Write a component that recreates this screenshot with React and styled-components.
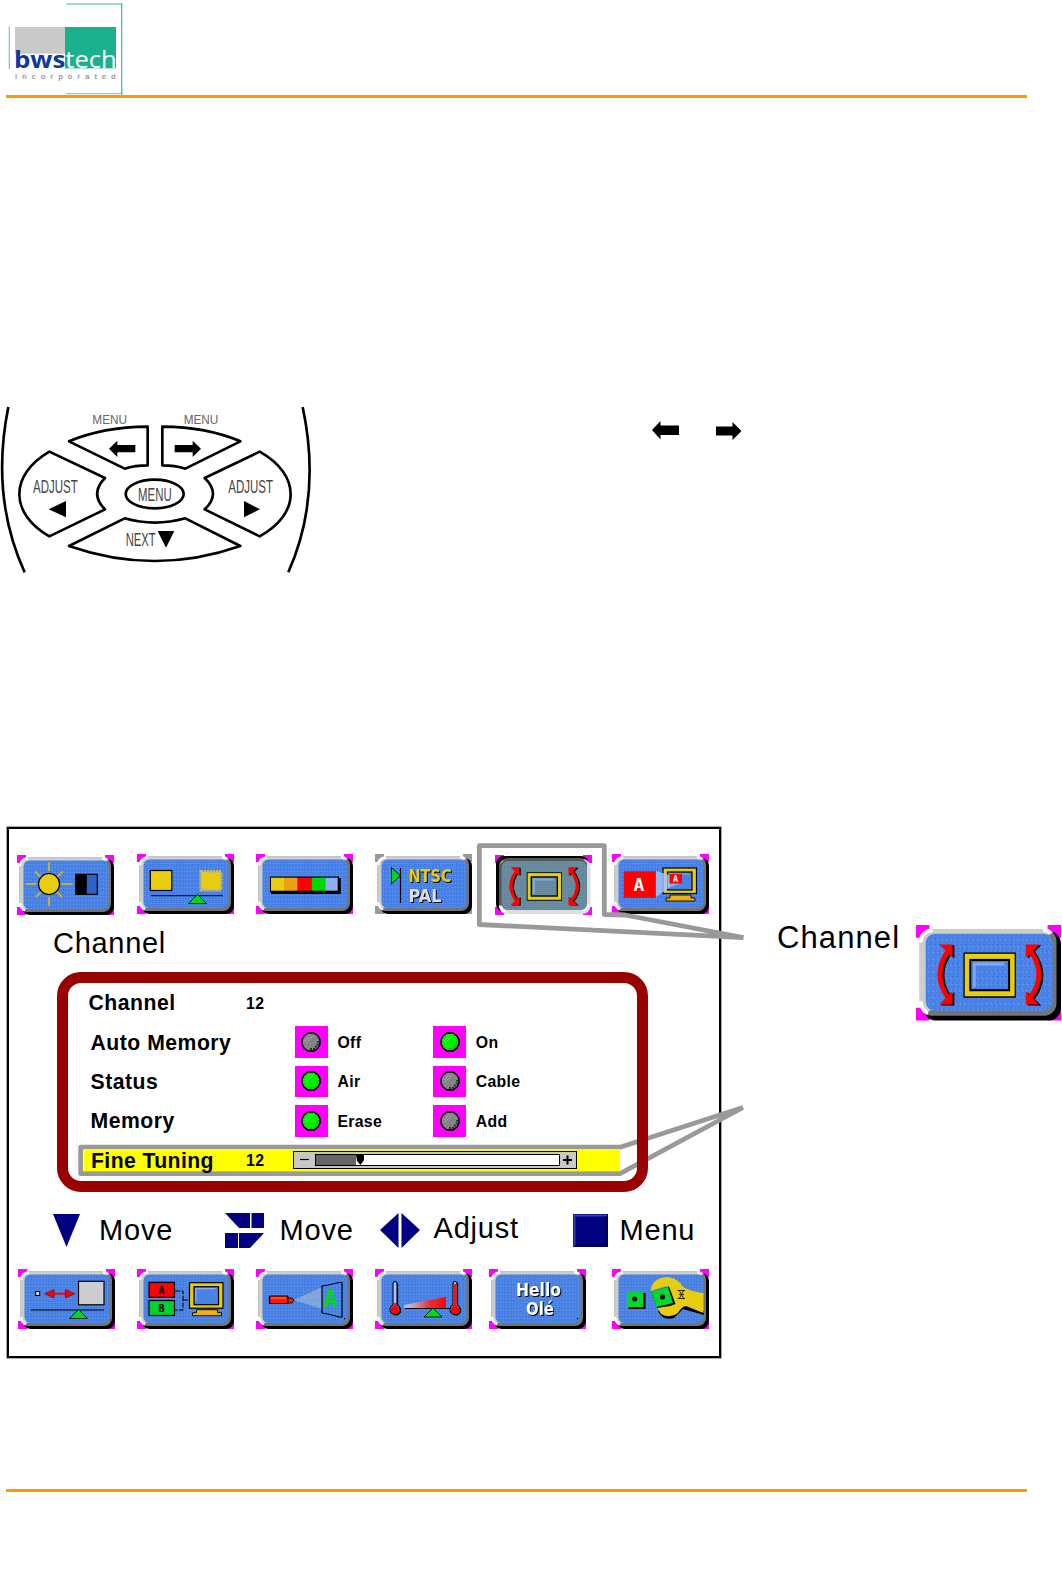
import React from "react";
import styled, { createGlobalStyle } from "styled-components";

const ORANGE = "#ff9900";
const MAGENTA = "#ff00ff";
const DARK_RED = "#990000";
const NAVY = "#000080";
const CALLOUT_GRAY = "#999999";
const YELLOW = "#e8cc10";
const BLUE = "#4b85ea";

const GlobalStyle = createGlobalStyle`
  body {
    margin: 0;
    background-color: white;
    color: black;
    font-family: "Liberation Sans", Arial, sans-serif;
  }

  svg {
    display: block;
    flex-shrink: 0;
  }
`;

const Page = styled.div`
  width: 1062px;
  height: 1573px;
  display: flex;
  flex-direction: column;
  overflow: hidden;
`;

const Header = styled.header`
  height: 95px;
`;

const Rule = styled.div`
  height: 3px;
  margin: 0 35px 0 6px;
  background-color: ${ORANGE};
`;

const RemoteSection = styled.section`
  height: 185px;
  margin-top: 297px;
  display: flex;
  align-items: flex-start;
`;

const Arrows = styled.div`
  display: flex;
  gap: 36px;
  margin: 26px 0 0 332px;
`;

const OsdSection = styled.section`
  height: 531px;
  margin-top: 247px;
  margin-bottom: 131px;
  padding-left: 7px;
  display: flex;
  align-items: flex-start;
  position: relative;
`;

const Screen = styled.div`
  box-sizing: border-box;
  width: 714px;
  height: 531px;
  border: 2px solid black;
  box-shadow: 0 0 0 0.5px #555;
  padding-top: 25px;
  flex-shrink: 0;
`;

const ButtonRow = styled.div`
  height: 62px;
  display: flex;
  align-items: flex-start;
`;

const ButtonSlot = styled.div`
  margin-left: ${props => props.$gap}px;
  padding-top: ${props => props.$drop || 0}px;
`;

const ScreenTitle = styled.div`
  margin: 11px 0 0 44px;
  height: 32px;
  line-height: 32px;
  font-size: 29px;
  letter-spacing: 0.7px;
`;

const Panel = styled.div`
  box-sizing: border-box;
  position: relative;
  z-index: 2;
  width: 591px;
  height: 220px;
  margin: 13px 0 0 47.5px;
  border: 11px solid ${DARK_RED};
  border-radius: 24px;
`;

const Row = styled.div`
  height: 39.4px;
  display: flex;
  align-items: center;
`;

const Label = styled.div`
  box-sizing: border-box;
  width: ${props => props.$width || 178.5}px;
  padding-top: 1px;
  padding-left: ${props => props.$indent || 23}px;
  font-size: 21.2px;
  font-weight: 700;
  letter-spacing: ${props => props.$spacing || 0.5}px;
  white-space: nowrap;
`;

const Value = styled.div`
  width: 48.5px;
  padding-top: 2px;
  font-size: 15.8px;
  font-weight: 700;
  letter-spacing: 0.5px;
`;

const Option = styled.div`
  width: 138.3px;
  display: flex;
  align-items: center;
`;

const OptionName = styled.span`
  padding-top: 2px;
  font-size: 15.8px;
  font-weight: 700;
  letter-spacing: 0.3px;
`;

const Bulb = styled.div`
  width: 33.5px;
  height: 31.5px;
  margin-right: 9.5px;
  display: flex;
  align-items: center;
  justify-content: center;
  background-color: ${MAGENTA};
`;

const Highlight = styled.div`
  width: 536px;
  height: 21.6px;
  margin-left: 16.5px;
  display: flex;
  align-items: center;
  background-color: #ffff00;
`;

const Slider = styled.div`
  box-sizing: border-box;
  width: 284px;
  height: 18px;
  margin-left: -2px;
  border: 1px solid black;
  background-color: #c8c8c8;
  display: flex;
  align-items: center;
`;

const Track = styled.div`
  box-sizing: border-box;
  width: 245px;
  height: 12px;
  border: 1px solid black;
  background-color: white;
  display: flex;
`;

const TrackFill = styled.div`
  width: 40px;
  background-color: #666;
`;

const Legend = styled.div`
  height: 36px;
  margin-top: 20px;
  display: flex;
  align-items: center;
`;

const LegendItem = styled.div`
  width: ${props => props.$width}px;
  padding-left: ${props => props.$left || 0}px;
  display: flex;
  align-items: center;
  gap: ${props => props.$gap}px;
`;

const LegendText = styled.span`
  font-size: 29px;
  line-height: 32px;
  letter-spacing: 0.8px;
  padding-bottom: ${props => props.$lift || 0}px;
`;

const Aside = styled.div`
  display: flex;
  margin: 98px 0 0 56px;
`;

const AsideTitle = styled.div`
  width: 138.5px;
  margin-top: -4px;
  font-size: 31px;
  line-height: 34px;
  letter-spacing: 1.1px;
`;

const Callouts = styled.svg`
  position: absolute;
  left: 0;
  top: 0;
  z-index: 1;
`;

const BottomButtons = styled(ButtonRow)`
  margin-top: 21px;
`;

const ShadowText = styled.text`
  font-family: "DejaVu Sans", sans-serif;
  font-weight: 700;
  filter: drop-shadow(1.6px 1.3px 0 black);
`;

const Logo = () => (
  <svg width="130" height="95" viewBox="0 0 390 285">
    <rect x="45" y="81" width="150" height="80" fill="#cacaca" />
    <rect x="195" y="81" width="153" height="124" fill="#1bb18d" />
    <path d="M28 80V207M199 12H367M199 281H367" stroke="#7dd1bd" strokeWidth="4" />
    <path d="M365 11V284" stroke="#4bbf9f" strokeWidth="4" />
    <g fontFamily="Open Sans, Noto Sans, sans-serif" fontSize="72">
      <text x="42" y="204" fontWeight="700" fill="#0c3a9e" textLength="154" lengthAdjust="spacingAndGlyphs">
        bws
      </text>
      <text x="196" y="204" fontWeight="500" fill="white" textLength="154" lengthAdjust="spacingAndGlyphs">
        tech
      </text>
    </g>
    <text x="45" y="237" fontSize="23" fontWeight="700" fill="#999" textLength="302">
      incorporated
    </text>
  </svg>
);

const Remote = () => (
  <svg width="320" height="185" viewBox="0 0 960 555" fill="none" stroke="black">
    <g strokeWidth="8" strokeLinejoin="round">
      <path d="M25 36C-8 200 0 370 74 532" />
      <path d="M908 36C943 200 937 370 865 532" />
      <path d="M443 95V211Q405 211 374 221L207 139Q310 96 443 95Z" />
      <path d="M487 95V211Q525 211 556 221L721 139Q620 96 487 95Z" />
      <path d="M148 170L315 249Q268 296 315 343L148 424C28 355 28 240 148 170Z" />
      <path d="M779 170L614 249Q664 296 614 343L779 424C903 355 903 240 779 170Z" />
      <path d="M207 453L374 370Q464 396 556 370L721 453Q464 543 207 453Z" />
      <ellipse cx="464" cy="297" rx="87" ry="43" />
    </g>
    <g fill="black" stroke="none">
      <path d="M327 161L352 137V150H406V172H352V186Z" />
      <path d="M603 161L578 137V150H524V172H578V186Z" />
      <path d="M146 343L198 318V367Z" />
      <path d="M780 343L732 318V367Z" />
      <path d="M473 408H523L498 458Z" />
    </g>
    <g fill="#444" stroke="none" fontFamily="Liberation Sans, Arial, sans-serif">
      <g fontSize="37" fill="#666">
        <text x="277" y="88" textLength="104" lengthAdjust="spacingAndGlyphs">MENU</text>
        <text x="551" y="87" textLength="104" lengthAdjust="spacingAndGlyphs">MENU</text>
      </g>
      <g fontSize="54">
        <text x="99" y="293" textLength="134" lengthAdjust="spacingAndGlyphs">ADJUST</text>
        <text x="685" y="293" textLength="134" lengthAdjust="spacingAndGlyphs">ADJUST</text>
        <text x="414" y="319" textLength="101" lengthAdjust="spacingAndGlyphs">MENU</text>
        <text x="377" y="452" textLength="90" lengthAdjust="spacingAndGlyphs">NEXT</text>
      </g>
    </g>
  </svg>
);

const ArrowLeft = () => (
  <svg width="27" height="19" viewBox="0 0 27 19">
    <path d="M0 9L8.500 0V4.500H27V14H8.500V18.500Z" />
  </svg>
);

const ArrowRight = () => (
  <svg width="27" height="19" viewBox="0 0 27 19">
    <path d="M26.500 10L17.500 1V5.500H1V14.500H17.500V19Z" />
  </svg>
);

// bevelled key, drawn on a 97x61 grid
const Key = ({ width = 97, height = 61, corner = MAGENTA, pressed, children }) => (
  <svg width={width} height={height} viewBox="0 0 97 61" preserveAspectRatio="none">
    <defs>
      <pattern id="weave" width="3" height="4" patternUnits="userSpaceOnUse">
        <path d="M0 0h1v1h-1zM1 2h1v1h-1z" fill="#2f62c8" opacity="0.5" />
        <path d="M2 1h1v1h-1z" fill="#8aa6d8" opacity="0.5" />
      </pattern>
    </defs>
    <path d="M0 0H9V8H0ZM88 0H97V8H88ZM0 52H9V60H0ZM88 52H97V60H88Z" fill={corner} />
    {pressed ? (
      <>
        <rect x="1" y="1" width="93" height="56" rx="8" fill="black" />
        <rect x="4" y="4" width="91.500" height="55" rx="8" fill="#dedede" />
        <path d="M11 3H87L92 8V20L12 54L4 50V10Z" fill="#555" />
        <path d="M5 51L10 57M88 56L94 50" stroke="white" strokeWidth="2.500" />
        <rect x="6.500" y="6" width="85.500" height="49" rx="6" fill="#688c9d" />
        <rect x="6.500" y="6" width="85.500" height="49" rx="6" fill="url(#weave)" opacity="0.45" />
      </>
    ) : (
      <>
        <rect x="5" y="4" width="92" height="56" rx="8" fill="black" />
        <rect x="2.500" y="2.500" width="91.500" height="54.500" rx="8" fill="#747474" />
        <path d="M10 2.500H86Q90 2.500 91.500 5L86 8H12V53L6 55Q2.500 53 2.500 49V10Q3 3 10 2.500Z" fill="#cdcdcd" />
        <path d="M3 11Q3.500 4 11 3.200M3.200 48Q3.500 53.500 8 55.500M85 3.200Q88 3 90 5" fill="none" stroke="white" strokeWidth="2.400" />
        <rect x="6.500" y="5.500" width="85" height="48.500" rx="6" fill={BLUE} />
        <rect x="6.500" y="5.500" width="85" height="48.500" rx="6" fill="url(#weave)" />
      </>
    )}
    {children}
  </svg>
);

const Fulcrum = ({ x, y }) => (
  <path d={`M${x} ${y}l9 9h-18z`} fill="#00d818" stroke="black" strokeWidth="0.8" />
);

const Monitor = ({ x, y }) => (
  <g transform={`translate(${x} ${y})`} stroke="black">
    <rect width="33.500" height="25.500" fill={YELLOW} strokeWidth="1.200" />
    <rect x="4.500" y="4" width="24.500" height="18" fill="#4b82e6" strokeWidth="1.200" />
    <path d="M6.500 19V6H26" fill="none" stroke="#8fb0f0" strokeWidth="1.200" />
    <path d="M7 27H28V30H32V33H3V30H7Z" fill="#f0b010" strokeWidth="0.900" />
  </g>
);

const BrightnessIcon = () => (
  <g>
    <path
      d="M32 7V16M32 42V51M9 29H19M45 29H55.500M18 16.500L24 22M46 16.500L40 22M19 42L24 37M45 42L40 37"
      stroke="#bfae4e"
      strokeWidth="2.200"
    />
    <circle cx="32" cy="29" r="10.500" fill={YELLOW} stroke="black" strokeWidth="1.200" />
    <rect x="58.800" y="19.300" width="21.500" height="20" fill="#2f62c8" stroke="black" strokeWidth="1.200" />
    <rect x="58.500" y="19" width="11.300" height="20.500" />
  </g>
);

const SharpnessIcon = () => (
  <g>
    <rect x="13.300" y="16.500" width="21.500" height="20" fill={YELLOW} stroke="black" strokeWidth="1.200" />
    <rect x="64" y="17.500" width="20" height="18.500" fill={YELLOW} stroke="#c9bd62" strokeWidth="3" strokeDasharray="2 1" />
    <path d="M14 41.700H86" stroke="black" />
    <Fulcrum x={60.5} y={40.5} />
  </g>
);

const ColorIcon = () => (
  <g>
    <rect x="15" y="24" width="69.800" height="16" />
    <rect x="14" y="22.500" width="69" height="16" />
    <rect x="15" y="23.700" width="13" height="13" fill={YELLOW} />
    <rect x="28" y="23.700" width="13.700" height="13" fill="#f0a010" />
    <rect x="41.700" y="23.700" width="13.800" height="13" fill="#ff0000" />
    <rect x="55.500" y="23.700" width="13.700" height="13" fill="#00d800" />
    <rect x="69.200" y="23.700" width="12.500" height="13" fill="#8fb0f0" />
  </g>
);

const StandardIcon = () => (
  <g>
    <path d="M16.500 13.500V30L25.300 21.700Z" fill="#00d818" stroke="black" strokeWidth="0.800" />
    <path d="M25.500 14V49" stroke="black" strokeWidth="1.200" />
    <ShadowText x="33.500" y="28" fontSize="18" textLength="43" lengthAdjust="spacingAndGlyphs" fill={YELLOW}>
      NTSC
    </ShadowText>
    <ShadowText x="33.500" y="48.200" fontSize="18" textLength="33" lengthAdjust="spacingAndGlyphs" fill="#dedede">
      PAL
    </ShadowText>
  </g>
);

const ChannelIcon = () => (
  <g>
    {[1.3, 0].map(dx => (
      <g key={dx} transform={`translate(${dx} ${dx ? 0.6 : 0})`} stroke={dx ? "black" : "#ff0000"} fill={dx ? "black" : "#ff0000"}>
        <path d="M21 17Q11 31 21 45" fill="none" strokeWidth="3.300" />
        <path d="M15.500 12.200H24.400V20.500ZM15.500 50H24.400V41.700Z" stroke="none" />
        <path d="M77 17Q87.500 31 77 45" fill="none" strokeWidth="3.300" />
        <path d="M73.500 12.200H82.500L73.500 20.500ZM73.500 50H82.500L73.500 41.700Z" stroke="none" />
      </g>
    ))}
    <rect x="32.500" y="18" width="33.500" height="27" fill="none" stroke="black" strokeWidth="1.500" />
    <rect x="34.200" y="19.700" width="30.200" height="23.500" fill="none" stroke={YELLOW} strokeWidth="3.200" />
    <rect x="36.300" y="22" width="26" height="19" fill="none" stroke="black" strokeWidth="1.300" />
    <path d="M39 39V24.500H59" fill="none" stroke="#84a8ee" strokeWidth="1.800" />
  </g>
);

const PipIcon = () => (
  <g>
    <rect x="11.700" y="17.300" width="32" height="26.500" fill="#ff0000" />
    <text x="21.500" y="37" fontSize="18" fontWeight="700" fill="white" fontFamily="DejaVu Sans Mono, monospace">
      A
    </text>
    <Monitor x={51} y={14} />
    <path d="M44 17L57 21V34L44 43Z" fill="#a6c3ff" opacity="0.8" />
    <path d="M57 21L70 29L57 34Z" fill="#a6c3ff" opacity="0.6" />
    <rect x="57.500" y="20" width="12.500" height="9.500" fill="#ff0000" />
    <text x="61" y="28" fontSize="8.500" fontWeight="700" fill="white" fontFamily="DejaVu Sans Mono, monospace">
      A
    </text>
  </g>
);

const SizeIcon = () => (
  <g>
    <rect x="17.700" y="22.500" width="4" height="4" fill="#dedede" stroke="black" />
    <path d="M33 24.700H50" stroke="#ff0000" strokeWidth="2" />
    <path d="M26.500 24.700L36 20.500V29ZM57 24.700L47.500 20.500V29Z" fill="#ff0000" stroke="#400" strokeWidth="0.500" />
    <rect x="60.500" y="12.300" width="25.500" height="23.500" fill="#cdcdd0" stroke="black" strokeWidth="1.200" />
    <path d="M12.700 41H86" stroke="black" />
    <Fulcrum x={60.5} y={40.5} />
  </g>
);

const SourceIcon = () => (
  <g>
    <rect x="12" y="13.300" width="25.500" height="15" fill="#ff0000" stroke="black" strokeWidth="1.200" />
    <rect x="12" y="31.500" width="25.500" height="15" fill="#00d030" stroke="black" strokeWidth="1.200" />
    <g fontSize="10" fontWeight="700" fontFamily="DejaVu Sans Mono, monospace">
      <text x="21.500" y="25">A</text>
      <text x="21.500" y="43">B</text>
    </g>
    <path d="M38 22H46V41H38M46 31H52" fill="none" stroke="black" strokeDasharray="5 1.500" />
    <Monitor x={52.5} y={13.7} />
  </g>
);

const KeystoneIcon = () => (
  <g>
    <path d="M38 31L66 18V40Z" fill="#86a9dc" opacity="0.85" />
    <path d="M41 30L66 20M41 31L66 27M41 32L66 35" stroke="#b9bd7a" strokeDasharray="1 3" />
    <rect x="13.500" y="27" width="18.500" height="7.500" rx="1" fill="#ff1800" stroke="black" strokeWidth="1.200" />
    <path d="M32 29H36L38 31L36 34H32Z" fill="#e82000" stroke="black" strokeWidth="0.800" />
    <path d="M15 29H30" stroke="#ff8040" />
    <path d="M66 17L72 16L83 13.500H86V48H83L72 45L66 44Z" fill="none" stroke="black" strokeWidth="1.200" />
    <text x="67.500" y="38" fontSize="23" fontWeight="700" fill="#00d818" fontFamily="DejaVu Sans Mono, monospace">
      A
    </text>
    <rect x="88" y="49" width="1.200" height="1.200" />
  </g>
);

const Thermometer = ({ x, full }) => (
  <g>
    <path d={`M${x - 2} 36V14q2 -3 4 0V36a5 5 0 1 1 -4 0Z`} transform="translate(1.2 0.8)" />
    <path d={`M${x - 2} 36V14q2 -3 4 0V36a5 5 0 1 1 -4 0Z`} fill="#a6c3ff" stroke="black" strokeWidth="1.100" />
    <path d={`M${x} 41V${full ? 15 : 34}`} stroke="#ff1010" strokeWidth="3" />
    <circle cx={x} cy="41" r="4.300" fill="#ff0000" />
  </g>
);

const TemperatureIcon = () => (
  <g>
    <defs>
      <linearGradient id="heat">
        <stop offset="0" stopColor="#a6c3ff" />
        <stop offset="0.200" stopColor="#c8a8c8" />
        <stop offset="0.600" stopColor="#ee3038" />
        <stop offset="1" stopColor="#ff0000" />
      </linearGradient>
    </defs>
    <Thermometer x={20} />
    <Thermometer x={80} full />
    <path d="M29 36L71 28V39H29Z" fill="url(#heat)" />
    <path d="M30 39.500H76" stroke="black" />
    <Fulcrum x={58} y={39} />
  </g>
);

const LanguageIcon = () => (
  <g>
    <ShadowText x="27" y="26.500" fontSize="17" textLength="45" lengthAdjust="spacingAndGlyphs" fill="white">
      Hello
    </ShadowText>
    <ShadowText x="37" y="46" fontSize="17" textLength="28" lengthAdjust="spacingAndGlyphs" fill="white">
      Olé
    </ShadowText>
    <rect x="88" y="49" width="1.200" height="1.200" />
  </g>
);

const SetupIcon = () => (
  <g>
    <rect x="16.500" y="24" width="17" height="16" />
    <rect x="15" y="22.700" width="16.500" height="15.500" fill="#00d830" />
    <circle cx="22.700" cy="30" r="2.500" />
    <path d="M46 42Q50 52 62 49L71 40L92 46V42L72 32Z" />
    <path
      d="M38.500 22Q40 9 55 8Q66 9 71 18Q80 23 91.500 24V44L74 37Q69 38 66 44Q58 50 49 45L45 38L61 32L55 17Z"
      fill={YELLOW}
    />
    <path d="M39 23L57 17.500L63.500 35L58 37L45 39Z" />
    <path d="M39 22.700L56 17.700L61 34L44.500 38Z" fill="#00d830" />
    <circle cx="50.500" cy="28" r="2.500" />
    <path d="M67 21L72 30M72 21L67 30M65.500 21.500H73M65.500 29.500H73M67 25.500H72" stroke="black" strokeWidth="0.800" />
  </g>
);

const topKeys = [
  { icon: BrightnessIcon, gap: 8, drop: 1 },
  { icon: SharpnessIcon, gap: 23 },
  { icon: ColorIcon, gap: 22 },
  { icon: StandardIcon, gap: 21.5, corner: "#999" },
  { icon: ChannelIcon, gap: 23, drop: 1, pressed: true },
  { icon: PipIcon, gap: 20.5 }
];

const bottomKeys = [
  { icon: SizeIcon, gap: 9 },
  { icon: SourceIcon, gap: 22 },
  { icon: KeystoneIcon, gap: 22 },
  { icon: TemperatureIcon, gap: 21.5 },
  { icon: LanguageIcon, gap: 17.5 },
  { icon: SetupIcon, gap: 26 }
];

const settings = [
  { label: "Auto Memory", options: [["Off", false], ["On", true]] },
  { label: "Status", options: [["Air", true], ["Cable", false]] },
  { label: "Memory", options: [["Erase", true], ["Add", false]] }
];

const renderKeys = keys =>
  keys.map(({ icon: Icon, gap, drop, ...rest }, i) => (
    <ButtonSlot key={i} $gap={gap} $drop={drop}>
      <Key {...rest}>
        <Icon />
      </Key>
    </ButtonSlot>
  ));

const Lamp = ({ on }) => (
  <svg width="20" height="20" viewBox="0 0 20 20">
    <path
      d="M7 1H13L17 4L19 8V12L17 16L13 19H7L3 16L1 12V8L3 4Z"
      fill={on ? "#00f000" : "#858585"}
      stroke="black"
      strokeWidth="1.500"
    />
    <path d="M4 9L9 3.500M5 11L12 4" stroke={on ? "#90ff90" : "#b5b5b5"} strokeDasharray="2 1" />
    <path d="M9 17H13L17 12V9" fill="none" stroke={on ? "#3f9a3f" : "#2c2c2c"} strokeWidth="2" strokeDasharray="2 1" />
  </svg>
);

const SliderSign = ({ plus }) => (
  <svg width={plus ? 16 : 21} height="16" viewBox={plus ? "0 0 16 16" : "0 0 21 16"}>
    <path d={plus ? "M3 8H12M7.500 3.500V12.500" : "M6 7.500H15"} stroke="black" strokeWidth={plus ? 2 : 1.2} />
  </svg>
);

const Knob = () => (
  <svg width="9" height="10" viewBox="0 0 9 10">
    <path d="M0 0H8V5L4.500 10L1 6Z" />
  </svg>
);

const App = () => {
  return (
    <Page>
      <GlobalStyle />
      <Header>
        <Logo />
      </Header>
      <Rule />
      <RemoteSection>
        <Remote />
        <Arrows>
          <ArrowLeft />
          <ArrowRight />
        </Arrows>
      </RemoteSection>
      <OsdSection>
        <Screen>
          <ButtonRow>{renderKeys(topKeys)}</ButtonRow>
          <ScreenTitle>Channel</ScreenTitle>
          <Panel>
            <Row>
              <Label $indent={21}>Channel</Label>
              <Value>12</Value>
            </Row>
            {settings.map(v => (
              <Row key={v.label}>
                <Label>{v.label}</Label>
                <Value />
                {v.options.map(([name, on]) => (
                  <Option key={name}>
                    <Bulb>
                      <Lamp on={on} />
                    </Bulb>
                    <OptionName>{name}</OptionName>
                  </Option>
                ))}
              </Row>
            ))}
            <Row>
              <Highlight>
                <Label $width={162} $indent={7} $spacing={0.4}>Fine Tuning</Label>
                <Value>12</Value>
                <Slider>
                  <SliderSign />
                  <Track>
                    <TrackFill />
                    <Knob />
                  </Track>
                  <SliderSign plus />
                </Slider>
              </Highlight>
            </Row>
          </Panel>
          <Legend>
            <LegendItem $left={44} $width={171.5} $gap={19}>
              <svg width="27" height="34" viewBox="0 0 27 34">
                <path d="M0 1H27L13.500 34Z" fill={NAVY} />
              </svg>
              <LegendText>Move</LegendText>
            </LegendItem>
            <LegendItem $width={155.5} $gap={16}>
              <svg width="39" height="35" viewBox="0 0 39 35">
                <path d="M0 0H25V15H14ZM26.500 0H39V15H26.500ZM0 20H13V35H0ZM14 20H39L25 35H14Z" fill={NAVY} />
              </svg>
              <LegendText>Move</LegendText>
            </LegendItem>
            <LegendItem $width={192.5} $gap={13.5}>
              <svg width="40" height="35" viewBox="0 0 40 35">
                <path d="M0 17L18.500 0V35ZM40 17L21.500 0V35Z" fill={NAVY} />
              </svg>
              <LegendText $lift={4}>Adjust</LegendText>
            </LegendItem>
            <LegendItem $width={130} $gap={12}>
              <svg width="35" height="33" viewBox="0 0 35 33">
                <rect width="35" height="33" fill={NAVY} />
                <path d="M1.500 32V1.500H34" fill="none" stroke="#3d3da8" strokeWidth="2" />
                <path d="M2 31.500H33.500V2" fill="none" stroke="#00004c" strokeWidth="2" />
              </svg>
              <LegendText>Menu</LegendText>
            </LegendItem>
          </Legend>
          <BottomButtons>{renderKeys(bottomKeys)}</BottomButtons>
        </Screen>
        <Aside>
          <AsideTitle>Channel</AsideTitle>
          <Key width={145} height={97}>
            <ChannelIcon />
          </Key>
        </Aside>
        <Callouts width="1062" height="531" viewBox="0 827 1062 531">
          <g fill="none" stroke={CALLOUT_GRAY} strokeWidth="4.800" strokeLinejoin="round" strokeLinecap="butt">
            <path d="M743.500 937.700L625 915L604.300 914.500V845.700H479.300V924.500L743.500 937.700" />
            <path d="M743 1107.500L620 1147.200H80.700V1173.700H620L743 1107.500" />
          </g>
        </Callouts>
      </OsdSection>
      <Rule />
    </Page>
  );
};

export default App;
